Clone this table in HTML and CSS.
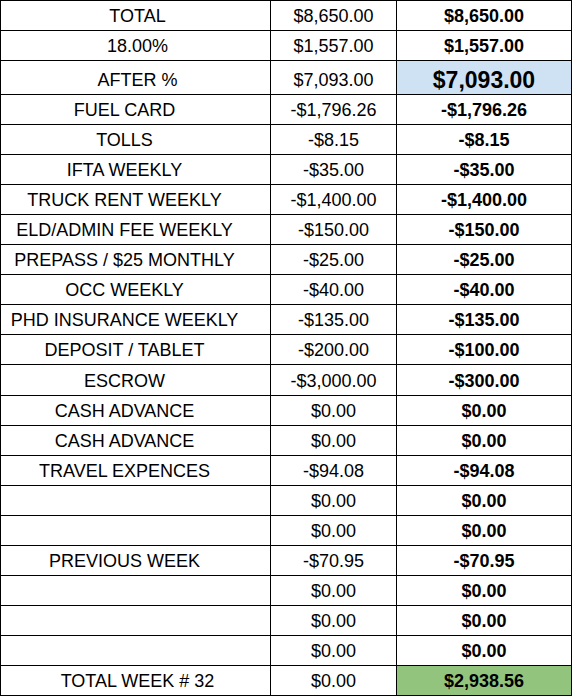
FILE: index.html
```html
<!DOCTYPE html>
<html>
<head>
<meta charset="utf-8">
<link rel="stylesheet" href="styles.css">
</head>
<body>
<div class="sheet">
  <div class="c label">TOTAL</div><div class="c val">$8,650.00</div><div class="c sum">$8,650.00</div>
  <div class="c label">18.00%</div><div class="c val">$1,557.00</div><div class="c sum">$1,557.00</div>
  <div class="c label">AFTER %</div><div class="c val">$7,093.00</div><div class="c sum big blue">$7,093.00</div>
  <div class="c label off">FUEL CARD</div><div class="c val">-$1,796.26</div><div class="c sum">-$1,796.26</div>
  <div class="c label off">TOLLS</div><div class="c val">-$8.15</div><div class="c sum">-$8.15</div>
  <div class="c label off">IFTA WEEKLY</div><div class="c val">-$35.00</div><div class="c sum">-$35.00</div>
  <div class="c label off">TRUCK RENT WEEKLY</div><div class="c val">-$1,400.00</div><div class="c sum">-$1,400.00</div>
  <div class="c label off">ELD/ADMIN FEE WEEKLY</div><div class="c val">-$150.00</div><div class="c sum">-$150.00</div>
  <div class="c label off">PREPASS / $25 MONTHLY</div><div class="c val">-$25.00</div><div class="c sum">-$25.00</div>
  <div class="c label off">OCC WEEKLY</div><div class="c val">-$40.00</div><div class="c sum">-$40.00</div>
  <div class="c label off">PHD INSURANCE WEEKLY</div><div class="c val">-$135.00</div><div class="c sum">-$135.00</div>
  <div class="c label off">DEPOSIT / TABLET</div><div class="c val">-$200.00</div><div class="c sum">-$100.00</div>
  <div class="c label off">ESCROW</div><div class="c val">-$3,000.00</div><div class="c sum">-$300.00</div>
  <div class="c label off">CASH ADVANCE</div><div class="c val">$0.00</div><div class="c sum">$0.00</div>
  <div class="c label off">CASH ADVANCE</div><div class="c val">$0.00</div><div class="c sum">$0.00</div>
  <div class="c label off">TRAVEL EXPENCES</div><div class="c val">-$94.08</div><div class="c sum">-$94.08</div>
  <div class="c label off"></div><div class="c val">$0.00</div><div class="c sum">$0.00</div>
  <div class="c label off"></div><div class="c val">$0.00</div><div class="c sum">$0.00</div>
  <div class="c label off">PREVIOUS WEEK</div><div class="c val">-$70.95</div><div class="c sum">-$70.95</div>
  <div class="c label off"></div><div class="c val">$0.00</div><div class="c sum">$0.00</div>
  <div class="c label off"></div><div class="c val">$0.00</div><div class="c sum">$0.00</div>
  <div class="c label off"></div><div class="c val">$0.00</div><div class="c sum">$0.00</div>
  <div class="c label">TOTAL WEEK # 32</div><div class="c val">$0.00</div><div class="c sum green">$2,938.56</div>
</div>
</body>
</html>
```
FILE: styles.css
```css
html, body {
  margin: 0;
  padding: 0;
  background: #ffffff;
}
.sheet {
  display: grid;
  width: 572px;
  box-sizing: border-box;
  padding: 1px;
  gap: 1px;
  background: #000000;
  grid-template-columns: 269px 125px 174px;
  grid-template-rows: 29px 29px 33px repeat(9, 29px) 30px repeat(10, 29px);
  font-family: "Liberation Sans", Arial, sans-serif;
  font-size: 18px;
  color: #000000;
}
.c {
  background: #ffffff;
  display: flex;
  align-items: flex-end;
  justify-content: center;
  line-height: 21px;
  padding-bottom: 3px;
  box-sizing: border-box;
  white-space: nowrap;
  overflow: hidden;
}
.label {
  padding-left: 4px;
}
.label.off {
  padding-left: 0;
  padding-right: 22px;
}
.sum {
  font-weight: bold;
}
.big {
  font-size: 23px;
  line-height: 26px;
  padding-bottom: 1px;
}
.blue {
  background: #cfe2f3;
}
.green {
  background: #93c47d;
}
```
